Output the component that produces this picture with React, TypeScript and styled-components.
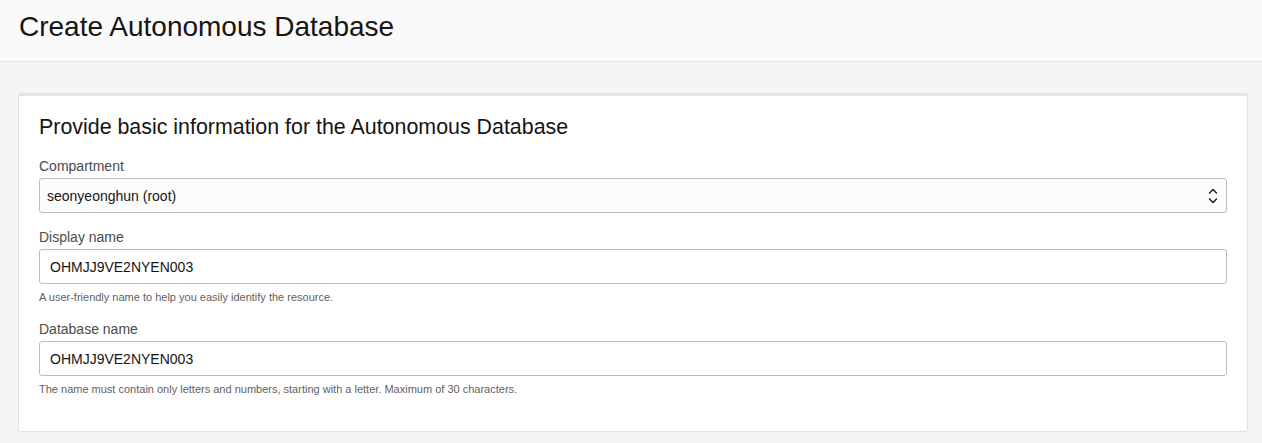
import React from "react";
import styled, { createGlobalStyle } from "styled-components";

const Global = createGlobalStyle`
  html, body { margin: 0; padding: 0; background: #f5f5f5; }
  body { font-family: "Liberation Sans", Arial, sans-serif; color: #161513; }
  * { box-sizing: border-box; }
`;

const Page = styled.div`
  display: flex;
  flex-direction: column;
  min-height: 443px;
  background: #f5f5f5;
`;

const Header = styled.header`
  height: 62px;
  background: #fafafa;
  border-bottom: 1px solid #e4e4e4;
  display: flex;
  align-items: center;
  padding-left: 19px;
`;

const Title = styled.h1`
  margin: 0;
  font-size: 28px;
  font-weight: 400;
  color: #161513;
  line-height: 1;
  padding-bottom: 7px;
`;

const Main = styled.main`
  padding: 31px 14px 0 18px;
`;

const Card = styled.section`
  background: #fff;
  border: 1px solid #e1e1e1;
  border-top: 3px solid #e3e3e6;
  border-radius: 3px;
  padding: 19px 20px 35px 20px;
  display: flex;
  flex-direction: column;
`;

const SectionTitle = styled.h2`
  margin: 0 0 19px 0;
  font-size: 21.4px;
  font-weight: 400;
  line-height: 24px;
  color: #161513;
`;

const Field = styled.div<{ $gap: number }>`
  display: flex;
  flex-direction: column;
  margin-bottom: ${(p) => p.$gap}px;
`;

const Label = styled.label`
  font-size: 14px;
  line-height: 17px;
  color: #4a4a4a;
  margin-bottom: 3px;
`;

const Control = styled.div<{ $select?: boolean }>`
  height: 35px;
  border: 1px solid #b9bdc2;
  border-radius: 3px;
  background: ${(p) => (p.$select ? "#fcfcfc" : "#fff")};
  display: flex;
  align-items: center;
  justify-content: space-between;
  padding: 0 8px 0 ${(p) => (p.$select ? 7 : 10)}px;
  font-size: 14px;
  color: #161513;
`;

const Help = styled.div`
  font-size: 11px;
  line-height: 13px;
  color: #5f5f5f;
  margin-top: 7px;
`;

const Chevrons = () => (
  <svg width="10" height="16" viewBox="0 0 10 16" fill="none" stroke="#222" strokeWidth="1.5" strokeLinecap="round" strokeLinejoin="round">
    <polyline points="1.5,5 5,1.5 8.5,5" />
    <polyline points="1.5,11 5,14.5 8.5,11" />
  </svg>
);

export default function App() {
  return (
    <>
      <Global />
      <Page>
        <Header>
          <Title>Create Autonomous Database</Title>
        </Header>
        <Main>
          <Card>
            <SectionTitle>Provide basic information for the Autonomous Database</SectionTitle>
            <Field $gap={16}>
              <Label>Compartment</Label>
              <Control $select>
                <span>seonyeonghun (root)</span>
                <Chevrons />
              </Control>
            </Field>
            <Field $gap={17}>
              <Label>Display name</Label>
              <Control>OHMJJ9VE2NYEN003</Control>
              <Help>A user-friendly name to help you easily identify the resource.</Help>
            </Field>
            <Field $gap={0}>
              <Label>Database name</Label>
              <Control>OHMJJ9VE2NYEN003</Control>
              <Help>The name must contain only letters and numbers, starting with a letter. Maximum of 30 characters.</Help>
            </Field>
          </Card>
        </Main>
      </Page>
    </>
  );
}
